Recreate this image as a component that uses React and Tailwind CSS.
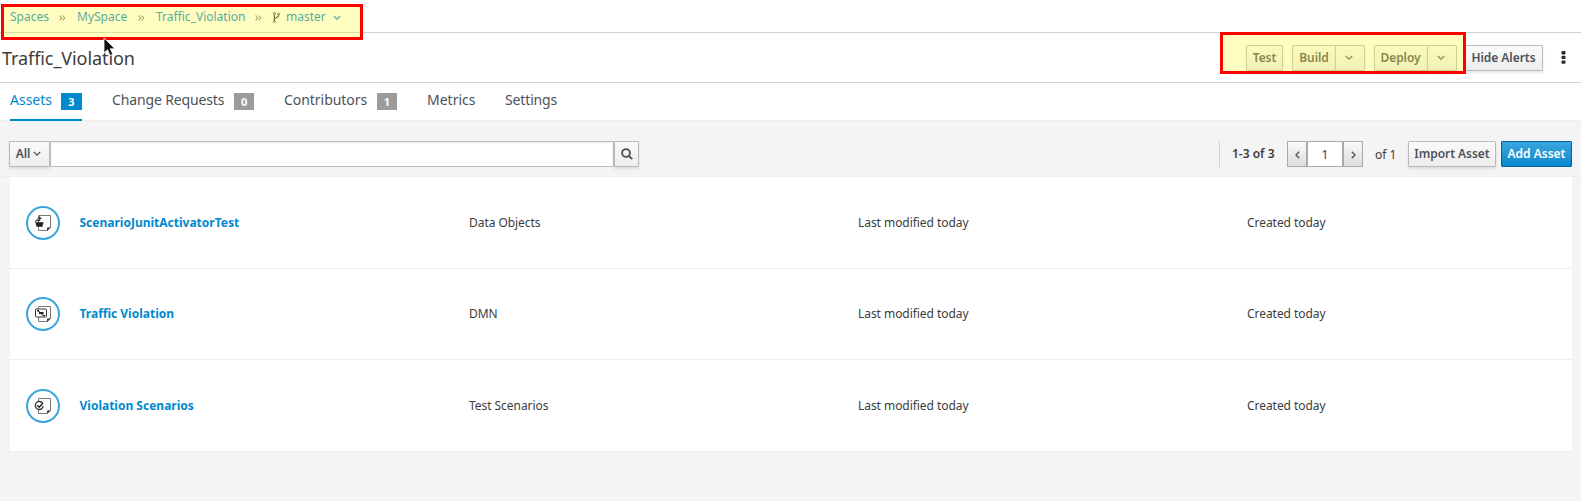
const button =
  "flex h-[26px] shrink-0 items-center justify-center border border-[#bbb] bg-gradient-to-b from-[#fafafa] to-[#ededed] text-[12px] font-semibold tracking-[-0.05px] text-[#4d5258] shadow-[0_2px_3px_rgba(3,3,3,0.1)] rounded-[1px]";

function Chevron({ className = "" }) {
  return (
    <svg className={className} width="8" height="6" viewBox="0 0 8 6" fill="none" stroke="currentColor" strokeWidth="1.1">
      <path d="M.8 1L4 4.200 7.200 1" />
    </svg>
  );
}

function Branch() {
  return (
    <svg className="ml-[11px] mr-[6px] mt-px text-[#363636]" width="7" height="11" viewBox="0 0 7 11" fill="none" stroke="currentColor">
      <circle cx="1.4" cy="1.5" r="0.9" />
      <circle cx="5.6" cy="2.2" r="0.9" />
      <circle cx="1.4" cy="9.5" r="0.9" />
      <path d="M1.4 2.5v6M5.6 3.2C5.6 6 1.6 5 1.5 7.6" strokeWidth="1.3" />
    </svg>
  );
}

function Angle({ left }) {
  return (
    <svg className="mt-px" width="5" height="8" viewBox="0 0 5 8" fill="none" stroke="#4d5258" strokeWidth="1.3">
      <path d={left ? "M4.2 .8L1 4l3.2 3.2" : "M.8 .8L4 4 .8 7.2"} />
    </svg>
  );
}

function AssetIcon({ kind }) {
  return (
    <svg className="block h-[34px] w-[34px]" viewBox="0 0 34 34" fill="none">
      <circle cx="17" cy="17" r="16" stroke="#39a5dc" strokeWidth="2" />
      <path d="M12.5 9.5H24.5V21.5L21.5 24.5H12.5Z" fill="#fff" stroke="#777" />
      <path d="M24.8 21L21 24.8V21.8Z" fill="#333" />
      {kind === "data" && (
        <>
          <path d="M9 16h8.800l-1.300 5H10.500Z" fill="#222" stroke="#fff" strokeWidth=".4" />
          <path d="M9.200 15.500l2-1.500 2 1.500M13.500 15v-3.500M11.800 13l1.700-2 1.700 2" stroke="#444" strokeWidth="1.200" />
        </>
      )}
      {kind === "dmn" && (
        <>
          <rect x="9.500" y="12" width="11" height="8" rx=".8" fill="#fff" stroke="#333" />
          <path d="M11.500 13.500l3 2M15.500 17.500l3 1.500" stroke="#222" strokeWidth="1" />
          <path d="M13 15h4.500v2H13Z" fill="#222" />
          <path d="M11 13h2v1.500H11ZM17 17.800h2v1.200h-2Z" fill="#333" />
        </>
      )}
      {kind === "test" && (
        <>
          <circle cx="13.300" cy="16.500" r="4.700" fill="#fff" />
          <path d="M16.800 14.600A4 4 0 1 0 17.200 17.200" stroke="#333" strokeWidth="1.300" />
          <path d="M11.200 16.200l2 2 3.600-4" stroke="#222" strokeWidth="1.500" />
        </>
      )}
    </svg>
  );
}

function Crumb({ children, width }) {
  return (
    <>
      <span className={width}>{children}</span>
      <svg className="ml-[10px] mr-[11px] mt-[2px]" width="7" height="6" viewBox="0 0 7 6" fill="none" stroke="#777">
        <path d="M.5 .5L2.800 3 .5 5.500M3.500 .5L5.800 3 3.500 5.500" strokeWidth="1.1" />
      </svg>
    </>
  );
}

const tabs = [
  { label: "Assets", count: 3, active: true, slot: "w-[72px] mr-[30px]" },
  { label: "Change Requests", count: 0, slot: "w-[142px] mr-[30px] tracking-[-0.14px]" },
  { label: "Contributors", count: 1, slot: "w-[113px] mr-[30px] tracking-[-0.04px]" },
  { label: "Metrics", slot: "w-[48px] mr-[30px]" },
  { label: "Settings", slot: "w-[52px] tracking-[-0.14px]" },
];

const assets = [
  { name: "ScenarioJunitActivatorTest", type: "Data Objects", kind: "data", size: "h-[92px]" },
  { name: "Traffic Violation", type: "DMN", kind: "dmn", size: "h-[91px]" },
  { name: "Violation Scenarios", type: "Test Scenarios", kind: "test", size: "h-[92px]" },
];

export default function App() {
  return (
    <div className="relative h-[501px] w-[1581px] overflow-hidden whitespace-nowrap bg-[#f4f4f4] font-['Noto_Sans','Open_Sans',sans-serif] text-[12px] text-[#3c3c3c]">
      <nav className="flex h-[33px] items-center border-b border-[#d1d1d1] bg-white pl-[10px] pt-px text-[12px] text-[#0088ce]">
        <Crumb width="w-[39px]">Spaces</Crumb>
        <Crumb width="w-[51px]">MySpace</Crumb>
        <Crumb width="w-[89px]">Traffic_Violation</Crumb>
        <div className="-ml-[11px] flex items-center">
          <Branch />
          <span className="w-[47px]">master</span>
          <Chevron className="mt-[2px]" />
        </div>
      </nav>

      <header className="flex h-[50px] items-center justify-between border-b border-[#d1d1d1] bg-white pl-[2px]">
        <h1 className="pt-[2px] text-[18px] tracking-[-0.08px] text-[#3c3c3c]">Traffic_Violation</h1>
        <div className="flex items-center pr-[15px]">
          <button className={`${button} mr-[9px] w-[37px]`}>Test</button>
          <button className={`${button} w-[44px]`}>Build</button>
          <button className={`${button} -ml-px mr-[9px] w-[30px] pr-[2px]`}><Chevron /></button>
          <button className={`${button} w-[54px] pr-px`}>Deploy</button>
          <button className={`${button} -ml-px mr-[8px] w-[30px] pr-[2px]`}><Chevron /></button>
          <button className={`${button} mr-[18px] w-[78px] pr-px`}>Hide Alerts</button>
          <svg width="5" height="13" viewBox="0 0 5 13" fill="#292929">
            <rect x=".5" width="4" height="3.400" rx="1" />
            <rect x=".5" y="4.700" width="4" height="3.400" rx="1" />
            <rect x=".5" y="9.400" width="4" height="3.400" rx="1" />
          </svg>
        </div>
      </header>

      <div className="flex h-[38px] border-b border-[#ededed] bg-white pl-[10px]">
        {tabs.map((t) => (
          <div
            key={t.label}
            className={`flex h-[38px] shrink-0 justify-between text-[14px] leading-[34px] ${t.slot} ${
              t.active ? "border-b-2 border-[#0088ce] text-[#0088ce]" : "text-[#4d5258]"
            }`}
          >
            <span>{t.label}</span>
            {t.count !== undefined && (
              <span
                className={`mt-[10px] h-[17px] text-center text-[11px] font-bold leading-[18px] text-white ${
                  t.active ? "w-[21px] bg-[#0088ce]" : "w-[20px] bg-[#9c9c9c]"
                }`}
              >
                {t.count}
              </span>
            )}
          </div>
        ))}
      </div>

      <div className="flex h-[56px] items-center justify-between border-b border-[#ededed] pl-[9px] pr-[9px] pt-[11px]">
        <div className="flex">
          <button className={`${button} w-[41px] gap-[3px] pr-[2px]`}>All <Chevron /></button>
          <input className="h-[26px] w-[564px] border border-[#bbb] bg-white px-2 shadow-[inset_0_1px_1px_rgba(3,3,3,0.075)] outline-none" />
          <button className={`${button} w-[25px]`}>
            <svg width="12" height="12" viewBox="0 0 12 12" fill="none" stroke="#4d5258" strokeWidth="1.900">
              <circle cx="5" cy="5" r="3.900" />
              <path d="M7.800 7.800l3.400 3.400" />
            </svg>
          </button>
        </div>
        <div className="flex h-[26px] items-center">
          <div className="mr-[12px] h-[26px] w-px bg-[#d1d1d1]" />
          <span className="w-[55px] font-semibold">1-3 of 3</span>
          <button className="flex h-[26px] w-[20px] items-center justify-center border border-[#aaa] bg-gradient-to-b from-[#fafafa] to-[#dcdcdc]"><Angle left /></button>
          <span className="h-[26px] w-[36px] border border-[#aaa] bg-white text-center leading-[25px]">1</span>
          <button className="flex h-[26px] w-[20px] items-center justify-center border border-[#aaa] bg-gradient-to-b from-[#fafafa] to-[#dcdcdc]"><Angle /></button>
          <span className="ml-[12px] w-[33px] pt-px">of 1</span>
          <button className={`${button} mr-[5px] w-[88px]`}>Import Asset</button>
          <button className="h-[26px] w-[71px] rounded-[1px] border border-[#00659c] bg-gradient-to-b from-[#39a5dc] to-[#0088ce] text-[12px] font-semibold text-white">Add Asset</button>
        </div>
      </div>

      <main className="ml-[10px] mr-[9px] bg-white">
        {assets.map((a) => (
          <div key={a.name} className={`flex items-center border-b border-[#ededed] pl-[16px] tracking-[-0.05px] ${a.size}`}>
            <div className="w-[53.5px] shrink-0"><AssetIcon kind={a.kind} /></div>
            <span className="w-[389.5px] shrink-0 font-bold tracking-normal text-[#0088ce]">{a.name}</span>
            <span className="w-[389px] shrink-0">{a.type}</span>
            <span className="w-[389px] shrink-0">Last modified today</span>
            <span>Created today</span>
          </div>
        ))}
      </main>

      <div className="absolute left-[1px] top-[4px] h-[36px] w-[362px] border-[3px] border-[#f00] bg-[rgba(255,248,58,0.32)]" />
      <div className="absolute left-[1220px] top-[32px] h-[42px] w-[246px] border-[3px] border-[#f00] bg-[rgba(255,248,58,0.32)]" />
      <svg className="absolute left-[103px] top-[37px]" width="14" height="20" viewBox="0 0 14 20">
        <path d="M1 1V16L4.600 12.800 7 18.500 9.800 17.300 7.300 11.800H12Z" fill="#111" stroke="#fff" strokeWidth=".8" />
      </svg>
    </div>
  );
}
